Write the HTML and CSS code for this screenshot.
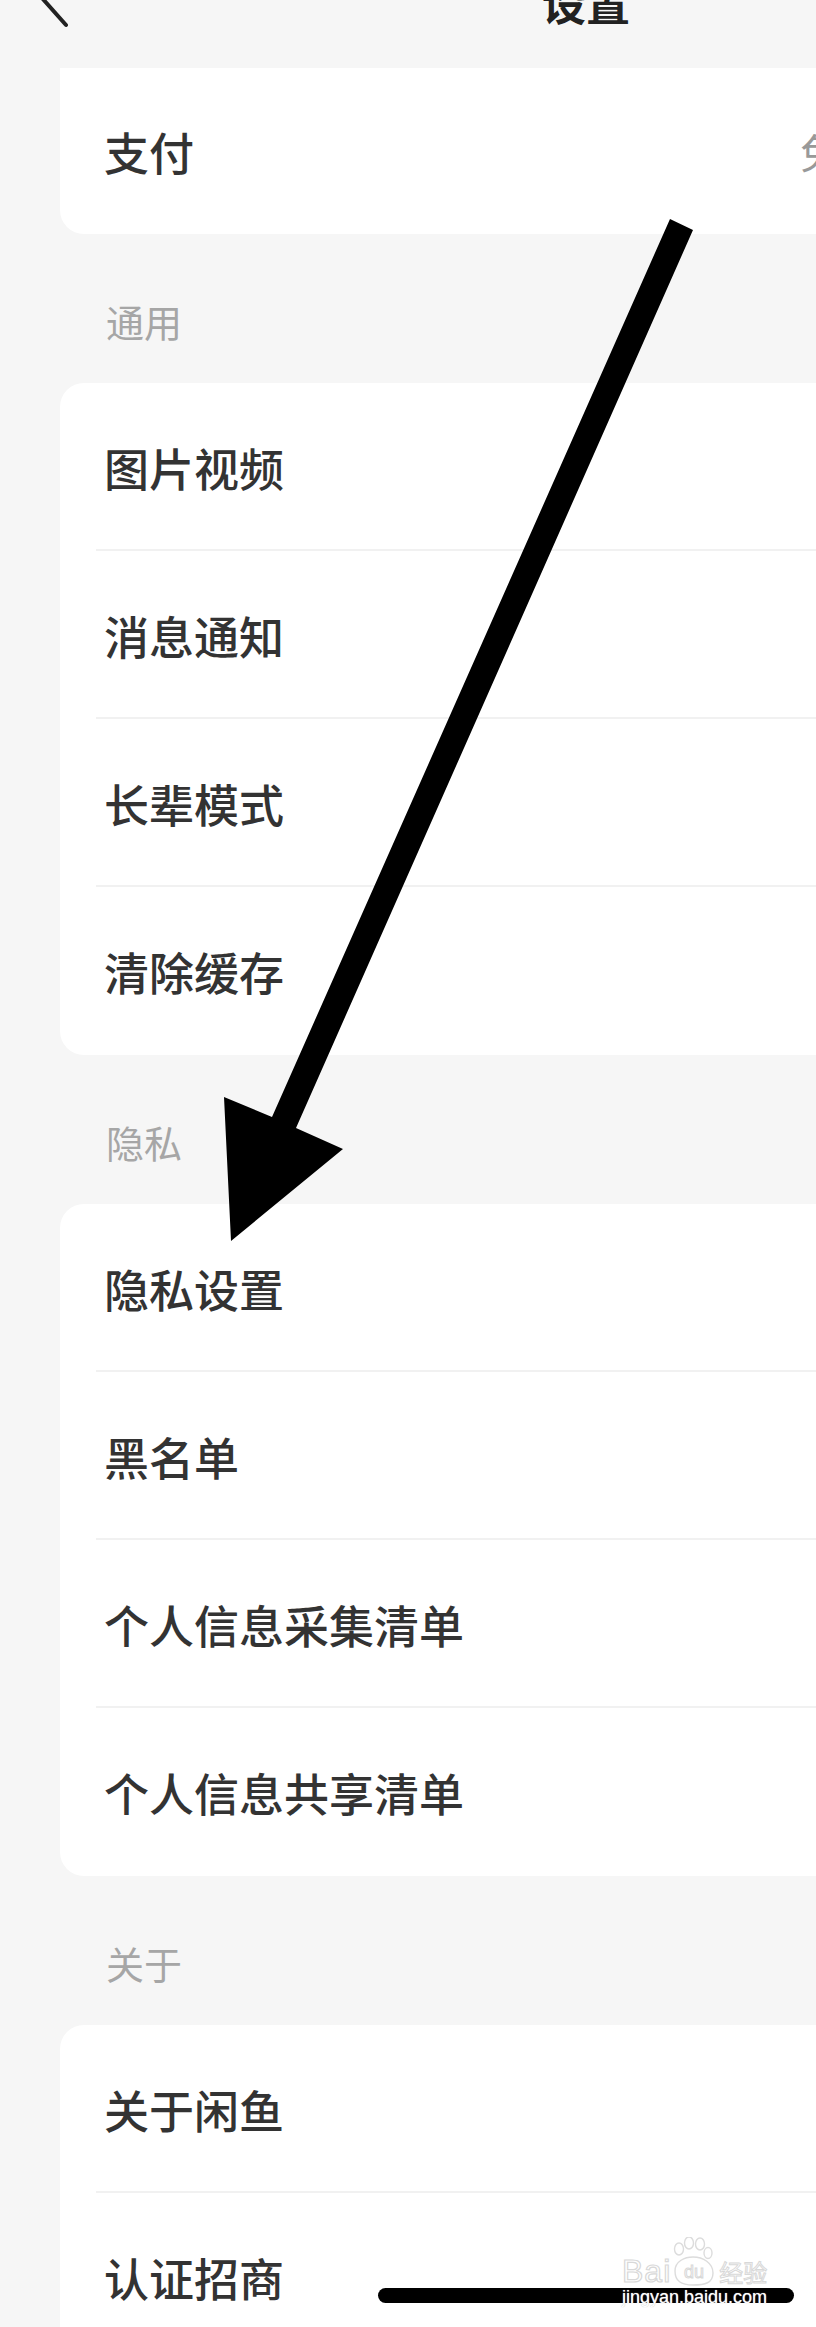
FILE: index.html
```html
<!DOCTYPE html>
<html lang="zh-CN">
<head>
  <meta charset="UTF-8">
  <meta name="viewport" content="width=device-width, initial-scale=1.0">
  <title>设置</title>
  <link rel="stylesheet" href="styles.css">
</head>
<body>
  <div class="page">
    <div class="nav-bar">
      <svg class="back-icon" width="40" height="68" viewBox="0 0 40 68">
        <polyline points="30,-27 6,-2 30,25" fill="none" stroke="#222" stroke-width="4" stroke-linecap="round" stroke-linejoin="round"/>
      </svg>
      <div class="nav-title">设置</div>
    </div>

    <div class="card card-top-cut">
      <div class="row row-split">
        <span class="row-label">支付</span>
        <span class="row-value">免密支付</span>
      </div>
    </div>

    <div class="section-title">通用</div>
    <div class="card">
      <div class="row"><span class="row-label">图片视频</span></div>
      <div class="row"><span class="row-label">消息通知</span></div>
      <div class="row"><span class="row-label">长辈模式</span></div>
      <div class="row"><span class="row-label">清除缓存</span></div>
    </div>

    <div class="section-title">隐私</div>
    <div class="card">
      <div class="row"><span class="row-label">隐私设置</span></div>
      <div class="row"><span class="row-label">黑名单</span></div>
      <div class="row"><span class="row-label">个人信息采集清单</span></div>
      <div class="row"><span class="row-label">个人信息共享清单</span></div>
    </div>

    <div class="section-title">关于</div>
    <div class="card">
      <div class="row"><span class="row-label">关于闲鱼</span></div>
      <div class="row"><span class="row-label">认证招商</span></div>
    </div>

    <!-- annotation arrow drawn over the screenshot -->
    <svg class="arrow" width="816" height="2327" viewBox="0 0 816 2327">
      <polygon points="670,219 693,230 296,1128 343,1149 231,1241 224,1097 272,1117" fill="#000"/>
    </svg>

    <div class="home-bar"></div>

    <div class="watermark">
      <div class="wm-logo">
        <span class="wm-bai">Bai</span>
        <svg class="wm-paw" width="48" height="50" viewBox="0 0 48 50">
          <g fill="none" stroke="#dcdcdc" stroke-width="1.4">
            <ellipse cx="10" cy="12" rx="4.5" ry="6"/>
            <ellipse cx="20" cy="6" rx="4.5" ry="6"/>
            <ellipse cx="31" cy="7" rx="4.5" ry="6"/>
            <ellipse cx="39" cy="16" rx="4" ry="5.5"/>
            <path d="M6 34 C6 24 16 20 24 20 C34 20 44 26 44 36 C44 46 36 48 24 48 C12 48 6 44 6 34 Z"/>
          </g>
          <text x="25" y="41" text-anchor="middle" class="wm-du">du</text>
        </svg>
        <span class="wm-cn">经验</span>
      </div>
      <div class="wm-url">jingyan.baidu.com</div>
    </div>
  </div>
</body>
</html>
```

FILE: styles.css
```css
body {
  margin: 0;
  background-color: #f6f6f6;
  font-family: "Noto Sans CJK SC", "Noto Sans", sans-serif;
}
.page {
  position: relative;
  width: 816px;
  height: 2327px;
  overflow: hidden;
}
.nav-bar {
  display: flex;
  align-items: flex-start;
  height: 68px;
}
.back-icon {
  margin-left: 36px;
  flex-shrink: 0;
}
.nav-title {
  margin-left: 466px;
  margin-top: -20px;
  font-size: 44px;
  line-height: 44px;
  font-weight: 700;
  color: #222;
}
.card {
  margin-left: 60px;
  width: 1100px;
  background-color: #fff;
  border-radius: 24px;
}
.card-top-cut {
  border-top-left-radius: 0;
  border-top-right-radius: 0;
}
.card-top-cut .row {
  height: 166px;
}
.row {
  box-sizing: border-box;
  display: flex;
  align-items: center;
  height: 168px;
  margin-left: 36px;
  padding-left: 8px;
}
.row + .row {
  border-top: 2px solid #f1f1f1;
  height: 170px;
  margin-top: -2px;
}
.row-split {
  display: grid;
  grid-template-columns: 696px auto;
  align-items: center;
}
.row-label {
  font-size: 45px;
  line-height: 45px;
  font-weight: 500;
  color: #333;
}
.row-value {
  font-size: 41px;
  line-height: 41px;
  color: #999;
  white-space: nowrap;
}
.section-title {
  margin-left: 106px;
  padding-top: 68px;
  padding-bottom: 43px;
  font-size: 38px;
  line-height: 38px;
  color: #a6a6a6;
}
.arrow {
  position: absolute;
  left: 0;
  top: 0;
}
.home-bar {
  position: absolute;
  left: 378px;
  top: 2288px;
  width: 416px;
  height: 15px;
  border-radius: 8px;
  background-color: #000;
}
.watermark {
  position: absolute;
  left: 622px;
  top: 2237px;
}
.wm-logo {
  display: flex;
  align-items: flex-end;
}
.wm-bai {
  font-family: "Liberation Sans", Arial, sans-serif;
  font-size: 32px;
  line-height: 32px;
  color: #fff;
  -webkit-text-stroke: 1.2px #d8d8d8;
  letter-spacing: 1px;
}
.wm-paw {
  margin-left: -2px;
}
.wm-du {
  font-family: "Liberation Sans", Arial, sans-serif;
  font-size: 18px;
  fill: #fff;
  stroke: #d8d8d8;
  stroke-width: 1;
}
.wm-cn {
  margin-left: 2px;
  margin-bottom: 2px;
  font-size: 24px;
  line-height: 26px;
  color: #fff;
  -webkit-text-stroke: 1px #d8d8d8;
}
.wm-url {
  margin-top: 0;
  font-family: "Liberation Sans", Arial, sans-serif;
  font-size: 18px;
  line-height: 20px;
  color: #fff;
  text-shadow: 0 0 1px #bbb;
}
```
